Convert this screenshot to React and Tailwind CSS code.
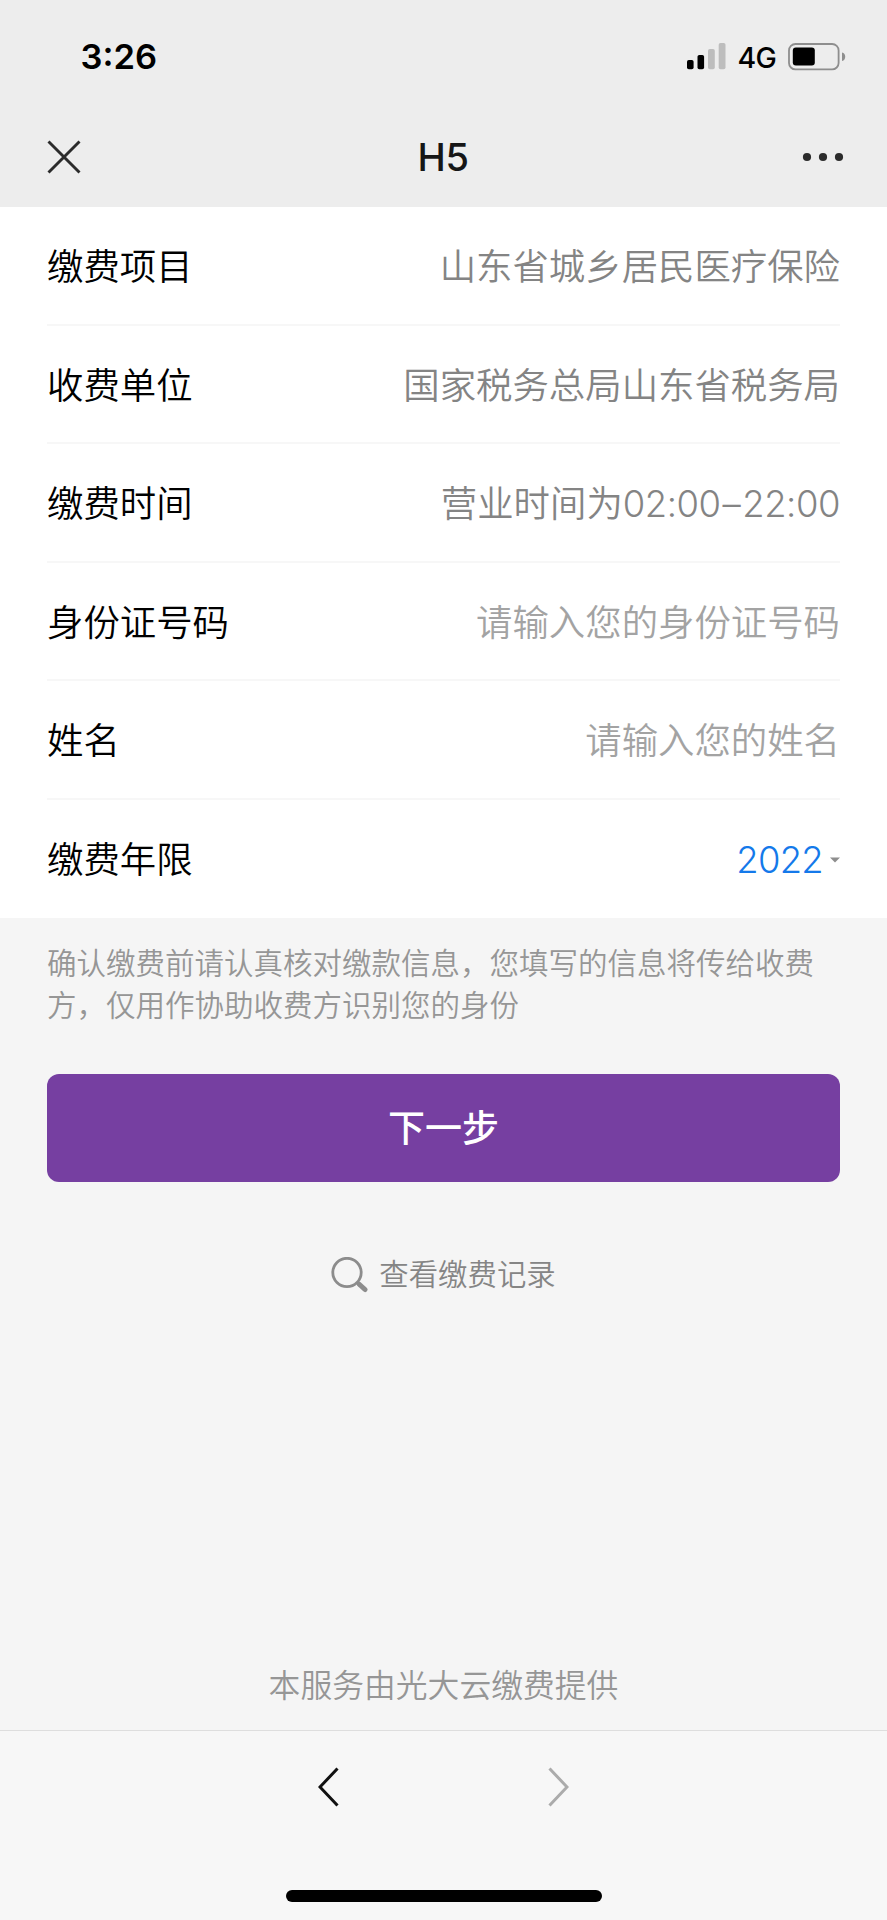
const rows = [
  { label: '缴费项目', value: '山东省城乡居民医疗保险' },
  { label: '收费单位', value: '国家税务总局山东省税务局' },
  { label: '缴费时间', value: '营业时间为', from: '02:00', to: '22:00' },
  { label: '身份证号码', value: '请输入您的身份证号码', placeholder: true },
  { label: '姓名', value: '请输入您的姓名', placeholder: true },
];

function StatusBar() {
  return (
    <div className="flex h-[113px] items-center justify-between pl-[80.500px] pr-[41px]">
      <span className="mt-[2px] text-[34.500px] font-semibold leading-none text-black">3:26</span>
      <div className="flex items-center">
        <svg width="39" height="27" viewBox="0 0 39 27">
          <rect x="0" y="17" width="6.6" height="9.2" rx="1.8" fill="#000" />
          <rect x="10.5" y="12" width="6.6" height="14.2" rx="1.8" fill="#000" />
          <rect x="21" y="6" width="6.8" height="20.2" rx="1.8" fill="#bdbdbd" />
          <rect x="31.7" y="0" width="6.8" height="26.2" rx="1.8" fill="#bdbdbd" />
        </svg>
        <span className="ml-[12px] mt-[3px] text-[28.500px] font-[450] leading-none tracking-[-0.800px] text-black">4G</span>
        <svg className="ml-[12px]" width="58" height="28" viewBox="0 0 58 28">
          <rect x="1" y="1" width="49.6" height="25.4" rx="6.5" fill="none" stroke="#8e8e8e" strokeWidth="1.8" />
          <rect x="4.8" y="4.6" width="22" height="18" rx="3" fill="#000" />
          <path d="M54 9.5c2.2.5 3.2 2.2 3.2 4.3s-1 3.800-3.200 4.300z" fill="#8e8e8e" />
        </svg>
      </div>
    </div>
  );
}

function TitleBar() {
  return (
    <div className="grid h-[94px] grid-cols-3 items-center pb-[7px] pl-[47px] pr-[43px]">
      <svg width="34" height="34" viewBox="0 0 34 34" stroke="#2b2b2b" strokeWidth="2.900">
        <path d="M1.500 1.500l31 31M32.500 1.500l-31 31" />
      </svg>
      <span className="-ml-[5px] text-center text-[38px] font-medium leading-none tracking-[-0.500px] text-[#161616]">H5</span>
      <svg className="justify-self-end" width="42" height="10" viewBox="0 0 42 10" fill="#2b2b2b">
        <circle cx="5" cy="5" r="4.100" />
        <circle cx="21" cy="5" r="4.100" />
        <circle cx="37" cy="5" r="4.100" />
      </svg>
    </div>
  );
}

export default function App() {
  return (
    <div className="flex h-[1920px] w-[887px] flex-col bg-[#f5f5f5] font-['Inter','Noto_Sans_CJK_SC_DemiLight','Noto_Sans_CJK_SC',sans-serif]">
      <header className="bg-[#ededed]">
        <StatusBar />
        <TitleBar />
      </header>

      <section className="bg-white px-[47px] text-[36.400px] font-[350] leading-none">
        {rows.map((row) => (
          <div key={row.label} className="flex h-[118.500px] items-center justify-between border-b-2 border-[#f7f7f7] pt-[4px]">
            <span className="text-black">{row.label}</span>
            <span className={row.placeholder ? 'text-[#a3a3a3]' : 'text-[#848484]'}>
              {row.value}
              {row.from && (
                <span className="font-[360] tracking-[-0.450px]">
                  {row.from}
                  <span className="mx-[2px]">–</span>
                  {row.to}
                </span>
              )}
            </span>
          </div>
        ))}
        <div className="flex h-[118.500px] items-center justify-between pt-[2px]">
          <span className="text-black">缴费年限</span>
          <span className="flex items-center gap-[7px] text-[#1479ea]">
            <span className="font-[360] tracking-[-0.700px]">2022</span>
            <svg width="10" height="6" viewBox="0 0 10 6" fill="#8e8e8e">
              <path d="M0 0.500h10L5 5.500z" />
            </svg>
          </span>
        </div>
      </section>

      <main className="flex flex-1 flex-col px-[47px] font-[350]">
        <p className="mt-[24px] text-[29.500px] leading-[42.400px] text-[#969696]">
          确认缴费前请认真核对缴款信息，您填写的信息将传给收费
          <br />
          方，仅用作协助收费方识别您的身份
        </p>
        <button className="mt-[47px] h-[108px] w-full rounded-[12px] bg-[#763fa1] pb-[2px] font-['Noto_Sans_CJK_SC',sans-serif] text-[37px] font-medium leading-none text-white">
          下一步
        </button>
        <div className="mt-[75px] flex items-center justify-center gap-[11px] text-[#858585]">
          <svg width="37" height="36" viewBox="0 0 37 36" fill="none" stroke="#8c8c8c">
            <circle cx="16" cy="15.500" r="14.200" strokeWidth="2.800" />
            <path d="M26.500 26l1.500 1.500" strokeWidth="3" />
            <path d="M28.500 27.500l5.500 5" strokeWidth="5" strokeLinecap="round" />
          </svg>
          <span className="text-[29.400px] leading-none">查看缴费记录</span>
        </div>
        <p className="mb-[28px] mt-auto text-center text-[31.800px] leading-none text-[#969696]">
          本服务由光大云缴费提供
        </p>
      </main>

      <footer className="flex h-[190px] flex-col items-center border-t border-[#dedede] bg-[#f7f7f7]">
        <div className="mt-[36px] flex w-[251px] justify-between">
          <svg width="21" height="40" viewBox="0 0 21 40" fill="none" stroke="#111" strokeWidth="3">
            <path d="M19.500 1.500L2 20l17.500 18.500" />
          </svg>
          <svg width="21" height="40" viewBox="0 0 21 40" fill="none" stroke="#ababab" strokeWidth="3">
            <path d="M1.500 1.500L19 20 1.500 38.500" />
          </svg>
        </div>
        <div className="mt-[83px] h-[12px] w-[316px] rounded-full bg-black" />
      </footer>
    </div>
  );
}
